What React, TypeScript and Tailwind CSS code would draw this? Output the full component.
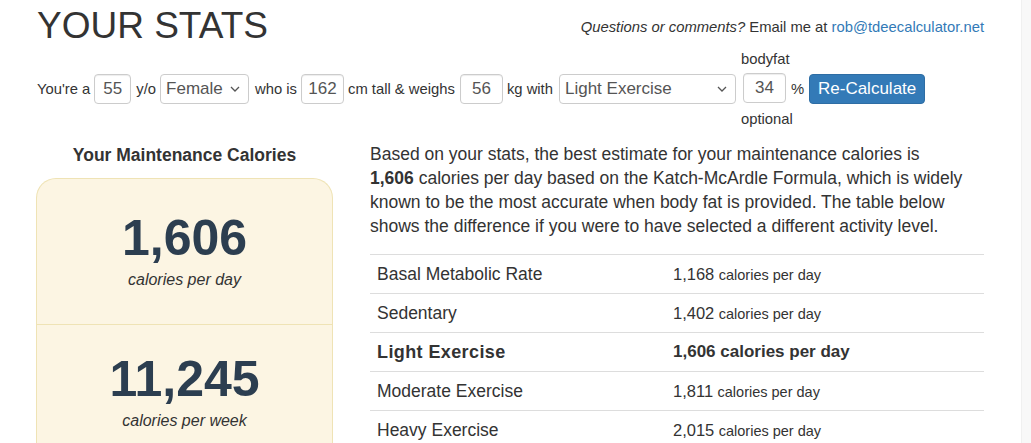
import React from "react";

const sans = "font-['Liberation_Sans',Arial,sans-serif]";

const rows = [
  { label: "Basal Metabolic Rate", value: "1,168" },
  { label: "Sedentary", value: "1,402" },
  { label: "Light Exercise", value: "1,606", active: true },
  { label: "Moderate Exercise", value: "1,811" },
  { label: "Heavy Exercise", value: "2,015" },
];

const NumInput: React.FC<{ value: string; w: string }> = ({ value, w }) => (
  <div
    className={`${w} h-[30px] flex items-center justify-center border border-[#ccc] rounded bg-white text-[17px] text-[#555] shadow-[inset_0_1px_1px_rgba(0,0,0,0.075)]`}
  >
    {value}
  </div>
);

const Select: React.FC<{ value: string; w: string }> = ({ value, w }) => (
  <div
    className={`${w} h-[30px] flex items-center justify-between pl-[5px] pr-[8px] border border-[#ccc] rounded bg-white text-[17px] text-[#555]`}
  >
    <span>{value}</span>
    <svg width="10" height="6" viewBox="0 0 10 6" fill="none" stroke="#555" strokeWidth="1.3">
      <path d="M1 1l4 4 4-4" />
    </svg>
  </div>
);

const App: React.FC = () => {
  return (
    <div className={`w-[1031px] h-[443px] overflow-hidden flex bg-white text-[#333] ${sans}`}>
      <div className="w-[1021px] pl-[36px] pr-[37px]">
        {/* Header */}
        <div className="flex items-start justify-between pt-[5px]">
          <h1 className="text-[37px] leading-[42px] ml-[1px]">YOUR STATS</h1>
          <p className="text-[14.8px] leading-[20px] mt-[12px]">
            <em>Questions or comments?</em> Email me at{" "}
            <span className="text-[#337ab7]">rob@tdeecalculator.net</span>
          </p>
        </div>

        {/* Form row */}
        <div className="flex items-center text-[14.8px] mt-[2px] ml-[1px]">
          <span className="mr-[4px]">You're a</span>
          <NumInput value="55" w="w-[37px]" />
          <span className="ml-[5px] mr-[4px]">y/o</span>
          <Select value="Female" w="w-[89px]" />
          <span className="ml-[6px] mr-[4px]">who is</span>
          <NumInput value="162" w="w-[43px]" />
          <span className="ml-[4px] mr-[5px]">cm tall &amp; weighs</span>
          <NumInput value="56" w="w-[43px]" />
          <span className="ml-[4px] mr-[6px]">kg with</span>
          <Select value="Light Exercise" w="w-[177px]" />
          <div className="w-[43px] flex flex-col items-start ml-[7px] whitespace-nowrap">
            <span className="leading-[20px] -ml-[2px]">bodyfat</span>
            <div className="mt-[4px]">
              <NumInput value="34" w="w-[43px]" />
            </div>
            <span className="leading-[20px] mt-[6px] -ml-[2px]">optional</span>
          </div>
          <span className="ml-[5px]">%</span>
          <button className="ml-[5px] w-[116px] h-[30px] rounded bg-[#337ab7] border border-[#2e6da4] text-white text-[17px]">
            Re-Calculate
          </button>
        </div>

        {/* Results */}
        <div className="flex gap-[37px] mt-[13px]">
          <div className="w-[297px] flex flex-col items-center">
            <h3 className="text-[17.5px] font-bold leading-[24px] text-[#333] mt-[1px]">Your Maintenance Calories</h3>
            <div className="mt-[11px] w-full rounded-t-[20px] border border-b-0 border-[#efe3b5] bg-[#fcf5e3] text-[#2c3e50]">
              <div className="h-[146px] flex flex-col items-center pt-[33px] border-b border-[#efe3b5]">
                <div className="text-[50px] font-bold leading-[52px]">1,606</div>
                <div className="text-[16px] italic leading-[22px] mt-[5px] text-[#333]">calories per day</div>
              </div>
              <div className="h-[140px] flex flex-col items-center pt-[28px]">
                <div className="text-[50px] font-bold leading-[52px]">11,245</div>
                <div className="text-[16px] italic leading-[22px] mt-[5px] text-[#333]">calories per week</div>
              </div>
            </div>
          </div>

          <div className="flex-1">
            <p className="text-[17.5px] leading-[24px] whitespace-nowrap">
              Based on your stats, the best estimate for your maintenance calories is
              <br />
              <b>1,606</b> calories per day based on the Katch-McArdle Formula, which is widely
              <br />
              known to be the most accurate when body fat is provided. The table below
              <br />
              shows the difference if you were to have selected a different activity level.
            </p>
            <div className="mt-[16px]">
              {rows.map((r) => (
                <div key={r.label} className="flex items-center h-[39px] border-t border-[#ddd]">
                  {r.active ? (
                    <>
                      <div className="w-[296px] pl-[7px] text-[18px] font-bold tracking-[0.4px]">{r.label}</div>
                      <div className="pl-[7px] text-[17px] font-bold">{r.value} calories per day</div>
                    </>
                  ) : (
                    <>
                      <div className="w-[296px] pl-[7px] text-[17.5px]">{r.label}</div>
                      <div className="pl-[7px]">
                        <span className="text-[16.5px]">{r.value}</span>{" "}
                        <span className="text-[14.5px]">calories per day</span>
                      </div>
                    </>
                  )}
                </div>
              ))}
            </div>
          </div>
        </div>
      </div>
      <div className="w-[10px] bg-[#f8f8f8] border-l border-[#f0f0f0]" />
    </div>
  );
};

export default App;
